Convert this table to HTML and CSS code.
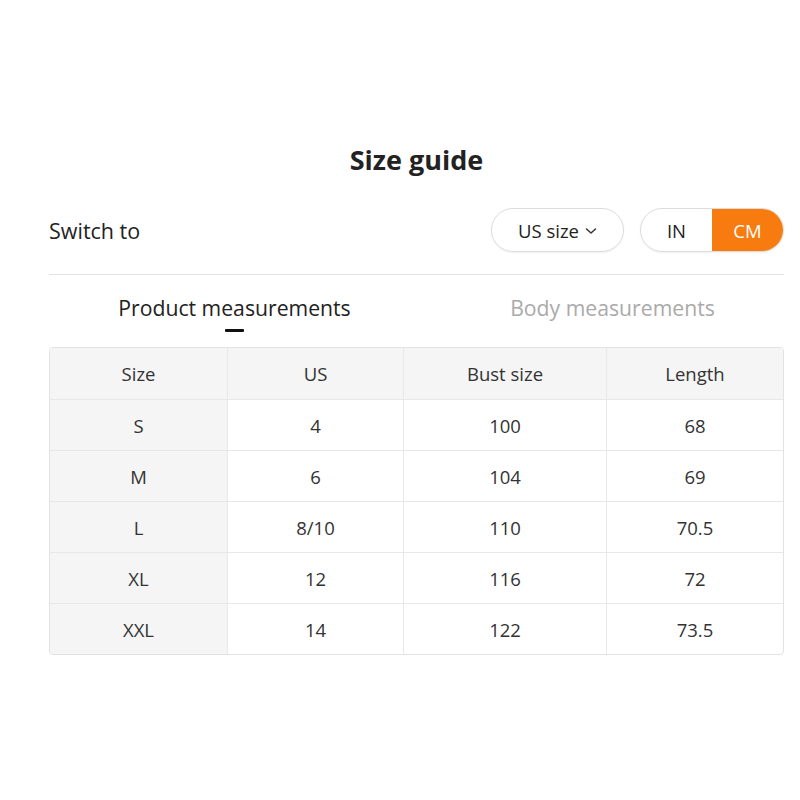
FILE: index.html
```html
<!DOCTYPE html>
<html>
<head>
<meta charset="utf-8">
<link rel="stylesheet" href="styles.css">
</head>
<body>
<div class="page">
  <h1 class="title">Size guide</h1>
  <div class="switch-row">
    <span class="switch-label">Switch to</span>
    <div class="controls">
      <div class="select">US size
        <svg class="chev" width="12" height="8" viewBox="0 0 12 8"><path d="M1.5 2 L6 6 L10.5 2" fill="none" stroke="#333" stroke-width="1.5" stroke-linecap="round" stroke-linejoin="round"/></svg>
      </div>
      <div class="units">
        <span class="unit">IN</span>
        <span class="unit active">CM</span>
      </div>
    </div>
  </div>
  <div class="tabs">
    <div class="tab active"><span class="tab-text">Product measurements<span class="bar"></span></span></div>
    <div class="tab"><span class="tab-text">Body measurements</span></div>
  </div>
  <div class="table">
    <div class="row head"><div class="c first">Size</div><div class="c">US</div><div class="c">Bust size</div><div class="c">Length</div></div>
    <div class="row"><div class="c first">S</div><div class="c">4</div><div class="c">100</div><div class="c">68</div></div>
    <div class="row"><div class="c first">M</div><div class="c">6</div><div class="c">104</div><div class="c">69</div></div>
    <div class="row"><div class="c first">L</div><div class="c">8/10</div><div class="c">110</div><div class="c">70.5</div></div>
    <div class="row"><div class="c first">XL</div><div class="c">12</div><div class="c">116</div><div class="c">72</div></div>
    <div class="row"><div class="c first">XXL</div><div class="c">14</div><div class="c">122</div><div class="c">73.5</div></div>
  </div>
</div>
</body>
</html>
```

FILE: styles.css
```css
* { box-sizing: border-box; }
body { margin: 0; background: #fff; font-family: "Open Sans", "Noto Sans", sans-serif; color: #222; }
.page { width: 735px; margin-left: 49px; padding-top: 142px; }
.title { margin: 0; text-align: center; font-size: 27px; font-weight: 700; line-height: 36px; color: #222; letter-spacing: 0; }
.switch-row { display: flex; align-items: center; justify-content: space-between; margin-top: 30px; height: 44px; }
.switch-label { font-size: 21.5px; color: #222; }
.controls { display: flex; gap: 16px; }
.select { width: 133px; height: 44px; border: 1px solid #dcdcdc; border-radius: 22px; display: flex; align-items: center; justify-content: center; gap: 6px; font-size: 18.5px; color: #222; box-shadow: 0 1px 2px rgba(0,0,0,0.06); }
.chev { margin-top: 2px; }
.units { display: flex; width: 144px; height: 44px; border: 1px solid #dcdcdc; border-radius: 22px; overflow: hidden; box-shadow: 0 1px 2px rgba(0,0,0,0.06); }
.unit { flex: 1; display: flex; align-items: center; justify-content: center; font-size: 18.5px; color: #222; }
.unit.active { background: #f77b0e; color: #fff; }
.tabs { display: flex; margin-top: 22px; border-top: 1px solid #e3e3e3; padding-top: 18px; height: 73px; }
.tab { flex: 1; text-align: center; font-size: 21.2px; color: #aaa; line-height: 30px; }
.tab-text { position: relative; display: inline-block; }
.tab.active { color: #222; padding-left: 14px; }
.tab.active .bar { position: absolute; left: 50%; margin-left: -10px; top: 36px; width: 19px; height: 3px; background: #111; border-radius: 1px; }
.tab:last-child { padding-left: 35px; }
.table { border: 1px solid #e3e3e3; border-radius: 4px; overflow: hidden; }
.row { display: grid; grid-template-columns: 177px 176px 203px 1fr; height: 51px; border-top: 1px solid #e8e8e8; }
.row:first-child { border-top: none; }
.row.head { background: #f5f5f5; }
.c { display: flex; align-items: center; justify-content: center; font-size: 18.5px; color: #333; border-left: 1px solid #e8e8e8; }
.c.first { border-left: none; background: #f5f5f5; }
```
